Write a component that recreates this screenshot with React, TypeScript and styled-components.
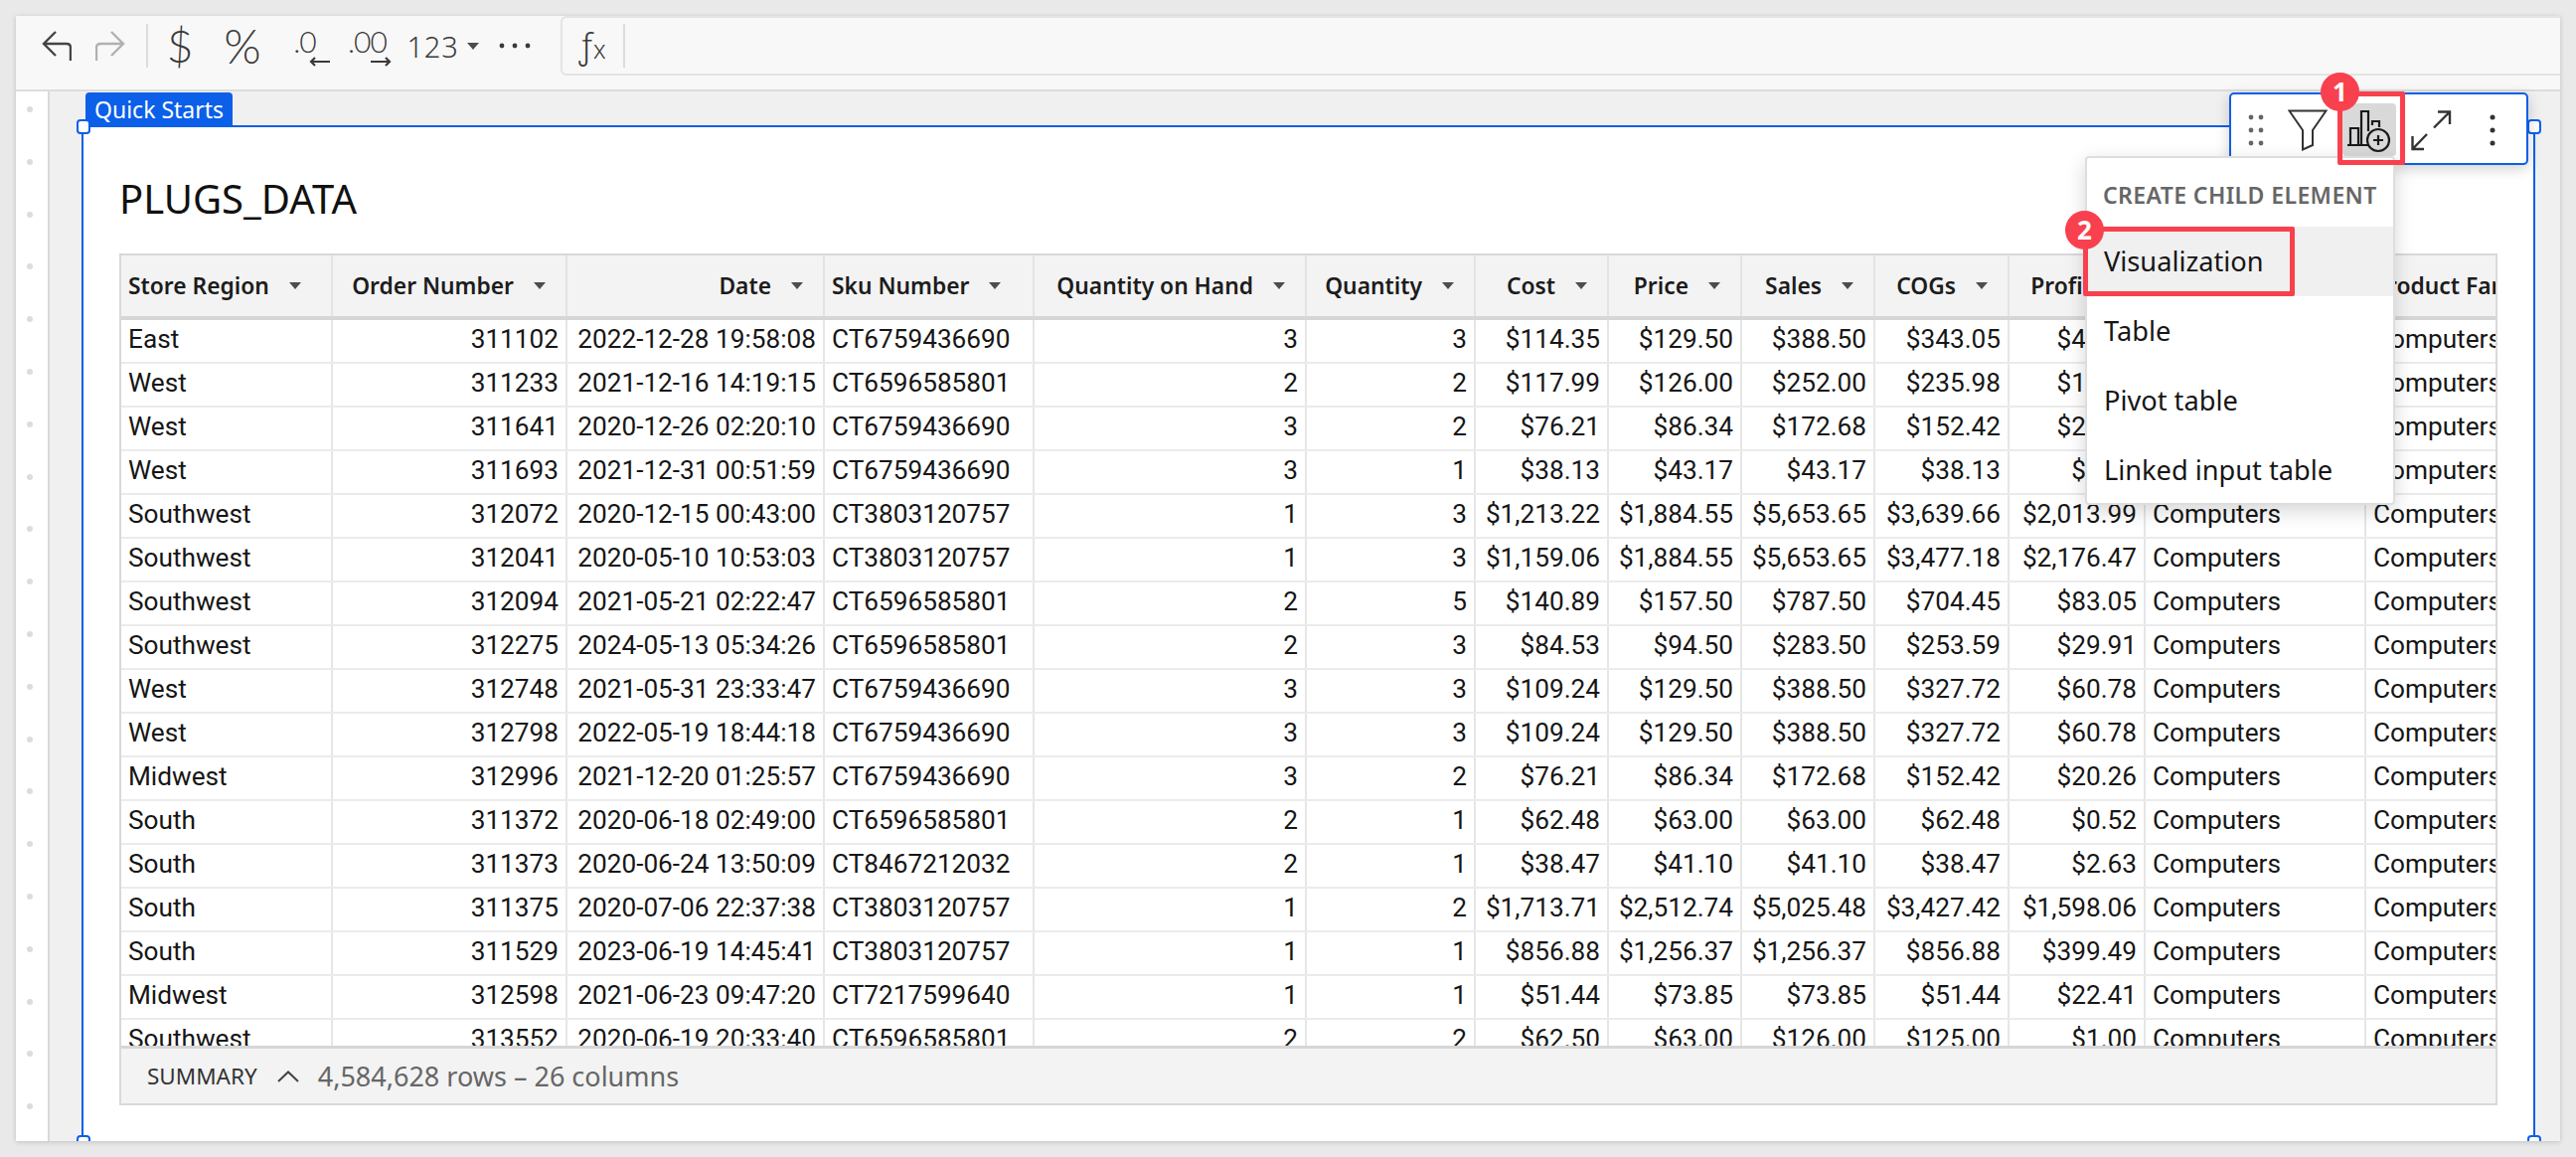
import styled, { createGlobalStyle } from 'styled-components';

const BLUE = '#0b5fe8';
const RED = '#f9404e';
const SANS = '"Noto Sans", "Open Sans", sans-serif';

const GlobalStyle = createGlobalStyle`
  html, body { margin: 0; padding: 0; background: #e9e9e9; }
  * { box-sizing: border-box; }
`;

const COLUMNS = [213, 236, 259, 211, 274, 170, 134, 134, 134, 135, 137, 222, 240];

const HEADERS: { name: string; right?: boolean }[] = [
  { name: 'Store Region' },
  { name: 'Order Number', right: true },
  { name: 'Date', right: true },
  { name: 'Sku Number' },
  { name: 'Quantity on Hand', right: true },
  { name: 'Quantity', right: true },
  { name: 'Cost', right: true },
  { name: 'Price', right: true },
  { name: 'Sales', right: true },
  { name: 'COGs', right: true },
  { name: 'Profit', right: true },
  { name: 'Product Type' },
  { name: 'Product Family' },
];

const ROWS = [
  'East|311102|2022-12-28 19:58:08|CT6759436690|3|3|$114.35|$129.50|$388.50|$343.05|$45.45',
  'West|311233|2021-12-16 14:19:15|CT6596585801|2|2|$117.99|$126.00|$252.00|$235.98|$16.02',
  'West|311641|2020-12-26 02:20:10|CT6759436690|3|2|$76.21|$86.34|$172.68|$152.42|$20.26',
  'West|311693|2021-12-31 00:51:59|CT6759436690|3|1|$38.13|$43.17|$43.17|$38.13|$5.04',
  'Southwest|312072|2020-12-15 00:43:00|CT3803120757|1|3|$1,213.22|$1,884.55|$5,653.65|$3,639.66|$2,013.99',
  'Southwest|312041|2020-05-10 10:53:03|CT3803120757|1|3|$1,159.06|$1,884.55|$5,653.65|$3,477.18|$2,176.47',
  'Southwest|312094|2021-05-21 02:22:47|CT6596585801|2|5|$140.89|$157.50|$787.50|$704.45|$83.05',
  'Southwest|312275|2024-05-13 05:34:26|CT6596585801|2|3|$84.53|$94.50|$283.50|$253.59|$29.91',
  'West|312748|2021-05-31 23:33:47|CT6759436690|3|3|$109.24|$129.50|$388.50|$327.72|$60.78',
  'West|312798|2022-05-19 18:44:18|CT6759436690|3|3|$109.24|$129.50|$388.50|$327.72|$60.78',
  'Midwest|312996|2021-12-20 01:25:57|CT6759436690|3|2|$76.21|$86.34|$172.68|$152.42|$20.26',
  'South|311372|2020-06-18 02:49:00|CT6596585801|2|1|$62.48|$63.00|$63.00|$62.48|$0.52',
  'South|311373|2020-06-24 13:50:09|CT8467212032|2|1|$38.47|$41.10|$41.10|$38.47|$2.63',
  'South|311375|2020-07-06 22:37:38|CT3803120757|1|2|$1,713.71|$2,512.74|$5,025.48|$3,427.42|$1,598.06',
  'South|311529|2023-06-19 14:45:41|CT3803120757|1|1|$856.88|$1,256.37|$1,256.37|$856.88|$399.49',
  'Midwest|312598|2021-06-23 09:47:20|CT7217599640|1|1|$51.44|$73.85|$73.85|$51.44|$22.41',
  'Southwest|313552|2020-06-19 20:33:40|CT6596585801|2|2|$62.50|$63.00|$126.00|$125.00|$1.00',
].map((row) => [...row.split('|'), 'Computers', 'Computers']);

const Page = styled.div`
  position: relative;
  width: 2592px;
  height: 1164px;
  padding: 16px;
  overflow: hidden;
  background: #e9e9e9;
  font-family: ${SANS};
`;

const Workbook = styled.div`
  display: flex;
  flex-direction: column;
  height: 1132px;
  box-shadow: 0 1px 5px rgba(0, 0, 0, 0.18);
`;

const Toolbar = styled.div`
  display: flex;
  align-items: center;
  height: 76px;
  padding-bottom: 14px;
  background: #f8f8f8;
  border-bottom: 2px solid #dcdcdc;
`;

const ToolSlot = styled.div<{ $w: number; $ml: number }>`
  display: flex;
  align-items: center;
  justify-content: center;
  flex: none;
  width: ${({ $w }) => $w}px;
  margin-left: ${({ $ml }) => $ml}px;
  color: #3a3a3a;
`;

const Divider = styled.div<{ $ml: number }>`
  flex: none;
  width: 2px;
  height: 44px;
  margin-left: ${({ $ml }) => $ml}px;
  background: #dcdcdc;
`;

const SymbolText = styled.span<{ $size: number }>`
  font-family: Lato, ${SANS};
  font-weight: 300;
  font-size: ${({ $size }) => $size}px;
  line-height: 1;
`;

const DecimalStack = styled.div`
  display: flex;
  flex-direction: column;
  align-items: flex-end;
  height: 42px;
`;

const DecimalText = styled.span<{ $mr: number }>`
  margin-right: ${({ $mr }) => $mr}px;
  font-family: Lato, ${SANS};
  font-weight: 300;
  font-size: 30px;
  line-height: 32px;
  height: 32px;
  letter-spacing: -1px;
`;

const Digits = styled.span`
  font-family: ${SANS};
  font-size: 29px;
  font-weight: 300;
  letter-spacing: 0.8px;
  line-height: 1;
  color: #3a3a3a;
`;

const FormulaBox = styled.div`
  display: flex;
  align-items: center;
  flex: 1;
  height: 60px;
  margin-left: 30px;
  border: 2px solid #e4e4e4;
  border-right: none;
  border-radius: 6px 0 0 6px;
`;

const FxLabel = styled.div`
  display: flex;
  align-items: baseline;
  justify-content: center;
  width: 60px;
  color: #3a3a3a;
  font-weight: 300;
`;

const FxF = styled.span`
  font-size: 34px;
  line-height: 1;
`;

const FxX = styled.span`
  font-size: 25px;
  line-height: 1;
  margin-left: 1px;
`;

const Workspace = styled.div`
  display: flex;
  flex: 1;
  min-height: 0;
  overflow: hidden;
`;

const Rail = styled.div`
  display: flex;
  flex-direction: column;
  align-items: center;
  flex: none;
  gap: 46.8px;
  width: 34px;
  padding: 15px 4px 0 0;
  background: #fff;
  border-right: 2px solid #d9d9d9;
`;

const RailDot = styled.div`
  flex: none;
  width: 6px;
  height: 6px;
  border-radius: 50%;
  background: #dcdcdc;
`;

const Canvas = styled.div`
  flex: 1;
  min-width: 0;
  padding: 34px 25px 0 32px;
  background: #f0f0f0;
  overflow: hidden;
`;

const Frame = styled.div`
  position: relative;
  display: flex;
  flex-direction: column;
  height: 1030px;
  padding: 0 36px 42px;
  background: #fff;
  border: 2px solid ${BLUE};
`;

const Tab = styled.div`
  position: absolute;
  left: 2px;
  top: -35px;
  height: 34px;
  padding: 0 9px;
  border-radius: 4px 4px 0 0;
  background: ${BLUE};
  color: #fff;
  font-size: 23px;
  line-height: 35px;
`;

const Handle = styled.div<{ $right?: boolean; $bottom?: boolean }>`
  position: absolute;
  width: 14px;
  height: 15px;
  background: #fff;
  border: 2px solid ${BLUE};
  border-radius: 4px;
  ${({ $right }) => ($right ? 'right: -8px;' : 'left: -7px;')}
  ${({ $bottom }) => ($bottom ? 'bottom: -3px;' : 'top: -8px;')}
`;

const Title = styled.h1`
  flex: none;
  margin: 0;
  padding-top: 48px;
  height: 127px;
  font-size: 40px;
  line-height: 48px;
  font-weight: 400;
  color: #111;
`;

const Table = styled.div`
  display: flex;
  flex-direction: column;
  flex: 1;
  min-height: 0;
  border: 2px solid #d9d9d9;
  overflow: hidden;
`;

const GridRow = styled.div`
  display: grid;
  flex: none;
  grid-template-columns: ${COLUMNS.map((w) => `${w}px`).join(' ')};
`;

const HeaderRow = styled(GridRow)`
  height: 65px;
  background: #f3f3f3;
  border-bottom: 4px solid #d6d6d6;
`;

const HeaderCell = styled.div<{ $right?: boolean }>`
  display: flex;
  align-items: center;
  justify-content: ${({ $right }) => ($right ? 'flex-end' : 'flex-start')};
  gap: 20px;
  padding: ${({ $right }) => ($right ? '0 20px 0 0' : '0 0 0 7px')};
  border-right: 2px solid #e3e3e3;
  font-size: 22.8px;
  font-weight: 600;
  color: #1c1c1c;
  white-space: nowrap;
  overflow: hidden;
`;

const Caret = styled.span`
  flex: none;
  width: 0;
  height: 0;
  border-left: 6px solid transparent;
  border-right: 6px solid transparent;
  border-top: 7px solid #4d4d4d;
`;

const ToolCaret = styled(Caret)`
  margin-left: 8px;
`;

const Body = styled.div`
  flex: 1;
  min-height: 0;
  overflow: hidden;
`;

const DataRow = styled(GridRow)`
  height: 44px;
  border-bottom: 2px solid #ebebeb;
`;

const DataCell = styled.div<{ $right?: boolean }>`
  padding: 0 7px;
  border-right: 2px solid #e6e6e6;
  font-family: Roboto, ${SANS};
  font-size: 26.2px;
  line-height: 38px;
  color: #161616;
  text-align: ${({ $right }) => ($right ? 'right' : 'left')};
  white-space: nowrap;
  overflow: hidden;
`;

const Summary = styled.div`
  display: flex;
  align-items: center;
  flex: none;
  height: 58px;
  padding-left: 26px;
  background: #f3f3f3;
  border-top: 3px solid #d6d6d6;
`;

const SummaryLabel = styled.span`
  font-size: 22.5px;
  color: #333;
`;

const SummaryChevron = styled.svg`
  margin-left: 20px;
`;

const SummaryCount = styled.span`
  margin-left: 19px;
  font-size: 27px;
  color: #666;
`;

const FloatBar = styled.div`
  position: absolute;
  left: 2243px;
  top: 93px;
  display: flex;
  align-items: flex-start;
  width: 301px;
  height: 73px;
  padding-top: 9px;
  background: #fff;
  border: 2px solid ${BLUE};
  border-radius: 5px;
  box-shadow: 0 4px 14px rgba(0, 0, 0, 0.18);
`;

const FloatSlot = styled.div<{ $w: number; $ml?: number; $active?: boolean }>`
  display: flex;
  align-items: center;
  justify-content: center;
  flex: none;
  width: ${({ $w }) => $w}px;
  height: 53px;
  margin-left: ${({ $ml }) => $ml ?? 0}px;
  border-radius: 4px;
  background: ${({ $active }) => ($active ? '#d9d9d9' : 'transparent')};
`;

const Menu = styled.div`
  position: absolute;
  left: 2098px;
  top: 157px;
  width: 312px;
  height: 351px;
  background: #fff;
  border: 2px solid #dedede;
  border-radius: 4px;
  box-shadow: 0 6px 20px rgba(0, 0, 0, 0.16);
`;

const MenuHeading = styled.div`
  height: 69px;
  padding: 19px 0 0 16px;
  font-size: 23px;
  line-height: 36px;
  font-weight: 600;
  letter-spacing: 0.4px;
  color: #666;
  white-space: nowrap;
`;

const MenuItem = styled.div<{ $active?: boolean }>`
  height: 70px;
  padding-left: 17px;
  font-size: 27.2px;
  line-height: 70px;
  color: #161616;
  background: ${({ $active }) => ($active ? '#f0f0f0' : 'transparent')};
`;

const Callout = styled.div<{ $x: number; $y: number; $w: number; $h: number }>`
  position: absolute;
  left: ${({ $x }) => $x}px;
  top: ${({ $y }) => $y}px;
  width: ${({ $w }) => $w}px;
  height: ${({ $h }) => $h}px;
  border: 5px solid ${RED};
  border-radius: 2px;
`;

const Badge = styled.div<{ $x: number; $y: number }>`
  position: absolute;
  left: ${({ $x }) => $x}px;
  top: ${({ $y }) => $y}px;
  width: 39px;
  height: 39px;
  border-radius: 50%;
  background: ${RED};
  color: #fff;
  font-size: 26px;
  font-weight: 700;
  line-height: 39px;
  text-align: center;
`;

function UndoIcon({ color }: { color: string }) {
  return (
    <svg width="30" height="31" viewBox="0 0 30 31" fill="none" stroke={color} strokeWidth="2.4">
      <path d="M14 1 L2 13 L14 25 M2 13 H25 Q29 13 29 17 V30" />
    </svg>
  );
}

function RedoIcon({ color }: { color: string }) {
  return (
    <svg width="30" height="31" viewBox="0 0 30 31" fill="none" stroke={color} strokeWidth="2.4">
      <path d="M16 1 L28 13 L16 25 M28 13 H5 Q1 13 1 17 V30" />
    </svg>
  );
}

function ShiftArrow({ right }: { right?: boolean }) {
  return (
    <svg width="22" height="10" viewBox="0 0 22 10" fill="none" stroke="#3a3a3a" strokeWidth="2.2">
      <path d={right ? 'M1 5 H20 M16 1 L20 5 L16 9' : 'M21 5 H2 M6 1 L2 5 L6 9'} />
    </svg>
  );
}

function MoreDots() {
  return (
    <svg width="32" height="6" viewBox="0 0 32 6" fill="#3a3a3a">
      <circle cx="3" cy="3" r="2.4" />
      <circle cx="16" cy="3" r="2.4" />
      <circle cx="29" cy="3" r="2.4" />
    </svg>
  );
}

function GripIcon() {
  return (
    <svg width="16" height="32" viewBox="0 0 16 32" fill="#666">
      {[3, 16, 29].map((y) => (
        <g key={y}>
          <circle cx="3" cy={y} r="2.4" />
          <circle cx="13" cy={y} r="2.4" />
        </g>
      ))}
    </svg>
  );
}

function FunnelIcon() {
  return (
    <svg width="40" height="42" viewBox="0 0 40 42" fill="none" stroke="#333" strokeWidth="2">
      <path d="M1.5 1.5 H38.5 L25 21 V36 L15 40.5 V21 Z" />
    </svg>
  );
}

function AddChartIcon() {
  return (
    <svg width="54" height="53" viewBox="0 0 54 53" fill="none" stroke="#1a1a1a" strokeWidth="2.2">
      <path d="M5 42 H26 M8 42 V25 H16 V42 M19 42 V8 H26 V28 M30 22 V18 H37 V24" />
      <circle cx="36" cy="37" r="11" />
      <path d="M31 37 H41 M36 32 V42" />
    </svg>
  );
}

function ExpandIcon() {
  return (
    <svg width="42" height="42" viewBox="0 0 42 42" fill="none" stroke="#333" strokeWidth="2.4">
      <path d="M28 2.5 H40 V15 M40 2.5 L24 18.5 M14 40 H2.5 V27 M2.5 40 L17 25" />
    </svg>
  );
}

function KebabIcon() {
  return (
    <svg width="8" height="34" viewBox="0 0 8 34" fill="#333">
      <circle cx="4" cy="4" r="2.5" />
      <circle cx="4" cy="17" r="2.5" />
      <circle cx="4" cy="30" r="2.5" />
    </svg>
  );
}

export default function App() {
  return (
    <Page>
      <GlobalStyle />
      <Workbook>
        <Toolbar>
          <ToolSlot $w={30} $ml={26}><UndoIcon color="#444" /></ToolSlot>
          <ToolSlot $w={30} $ml={24}><RedoIcon color="#b0b0b0" /></ToolSlot>
          <Divider $ml={21} />
          <ToolSlot $w={40} $ml={12}><SymbolText $size={46}>$</SymbolText></ToolSlot>
          <ToolSlot $w={44} $ml={21}><SymbolText $size={48}>%</SymbolText></ToolSlot>
          <ToolSlot $w={34} $ml={31}>
            <DecimalStack>
              <DecimalText $mr={15}>.0</DecimalText>
              <ShiftArrow />
            </DecimalStack>
          </ToolSlot>
          <ToolSlot $w={40} $ml={21}>
            <DecimalStack>
              <DecimalText $mr={5}>.00</DecimalText>
              <ShiftArrow right />
            </DecimalStack>
          </ToolSlot>
          <ToolSlot $w={71} $ml={18}>
            <Digits>123</Digits>
            <ToolCaret />
          </ToolSlot>
          <ToolSlot $w={32} $ml={21}><MoreDots /></ToolSlot>
          <FormulaBox>
            <FxLabel>
              <FxF>ƒ</FxF>
              <FxX>x</FxX>
            </FxLabel>
            <Divider $ml={1} />
          </FormulaBox>
        </Toolbar>
        <Workspace>
          <Rail>
            {Array.from({ length: 20 }, (_, i) => (
              <RailDot key={i} />
            ))}
          </Rail>
          <Canvas>
            <Frame>
              <Tab>Quick Starts</Tab>
              <Handle />
              <Handle $right />
              <Handle $bottom />
              <Handle $right $bottom />
              <Title>PLUGS_DATA</Title>
              <Table>
                <HeaderRow>
                  {HEADERS.map((h) => (
                    <HeaderCell key={h.name} $right={h.right}>
                      {h.name}
                      <Caret />
                    </HeaderCell>
                  ))}
                </HeaderRow>
                <Body>
                  {ROWS.map((row) => (
                    <DataRow key={row[1]}>
                      {row.map((value, i) => (
                        <DataCell key={i} $right={HEADERS[i].right}>
                          {value}
                        </DataCell>
                      ))}
                    </DataRow>
                  ))}
                </Body>
                <Summary>
                  <SummaryLabel>SUMMARY</SummaryLabel>
                  <SummaryChevron width="22" height="12" viewBox="0 0 22 12" fill="none" stroke="#444" strokeWidth="2">
                    <path d="M1 11 L11 1.5 L21 11" />
                  </SummaryChevron>
                  <SummaryCount>4,584,628 rows – 26 columns</SummaryCount>
                </Summary>
              </Table>
            </Frame>
          </Canvas>
        </Workspace>
      </Workbook>

      <FloatBar>
        <FloatSlot $w={50}><GripIcon /></FloatSlot>
        <FloatSlot $w={54}><FunnelIcon /></FloatSlot>
        <FloatSlot $w={54} $ml={8} $active><AddChartIcon /></FloatSlot>
        <FloatSlot $w={54} $ml={8}><ExpandIcon /></FloatSlot>
        <FloatSlot $w={54} $ml={8}><KebabIcon /></FloatSlot>
      </FloatBar>

      <Menu>
        <MenuHeading>CREATE CHILD ELEMENT</MenuHeading>
        <MenuItem $active>Visualization</MenuItem>
        <MenuItem>Table</MenuItem>
        <MenuItem>Pivot table</MenuItem>
        <MenuItem>Linked input table</MenuItem>
      </Menu>

      <Callout $x={2352} $y={92} $w={68} $h={74} />
      <Callout $x={2096} $y={228} $w={213} $h={70} />
      <Badge $x={2335} $y={73}>1</Badge>
      <Badge $x={2078} $y={212}>2</Badge>
    </Page>
  );
}
